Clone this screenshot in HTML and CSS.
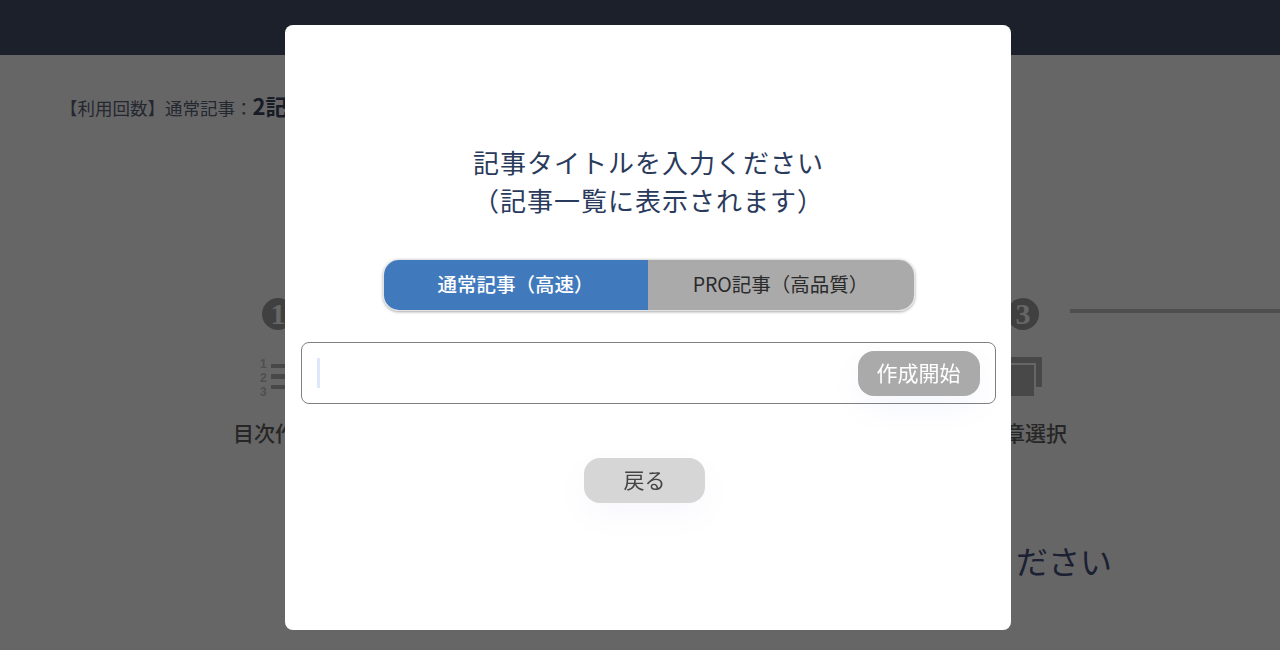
FILE: index.html
```html
<!DOCTYPE html>
<html lang="ja">
<head>
<meta charset="UTF-8">
<meta name="viewport" content="width=device-width, initial-scale=1.0">
<title>記事作成</title>
<link rel="stylesheet" href="styles.css">
</head>
<body>
    <header class="topbar"></header>
    <main class="page">
        <p class="usage">【利用回数】通常記事：<strong>2記事</strong></p>
        <div class="steps">
            <div class="step">
                <span class="step-num">1</span>
                <svg class="step-icon" viewBox="0 0 40 42" aria-hidden="true">
                    <text x="5" y="11.5" class="list-num">1</text>
                    <text x="5" y="25.5" class="list-num">2</text>
                    <text x="5" y="39.5" class="list-num">3</text>
                    <rect x="16" y="8" width="24" height="4"/>
                    <rect x="16" y="18" width="24" height="5"/>
                    <rect x="16" y="29" width="24" height="4"/>
                </svg>
                <span class="step-label">目次作成</span>
            </div>
            <div class="step"></div>
            <div class="step">
                <span class="step-num">3</span>
                <svg class="step-icon" viewBox="0 0 40 42" aria-hidden="true">
                    <path d="M6 1H37V31H31V7H6Z"/>
                    <rect x="0" y="9" width="29" height="31"/>
                </svg>
                <span class="step-label">文章選択</span>
            </div>
            <div class="step-line"></div>
        </div>
        <p class="lead">ください</p>
    </main>

    <div class="overlay">
        <div class="modal">
            <h2 class="modal-title">記事タイトルを入力ください<br>（記事一覧に表示されます）</h2>
            <div class="mode-switch">
                <button class="mode mode-active">通常記事（高速）</button>
                <button class="mode">PRO記事（高品質）</button>
            </div>
            <div class="title-field">
                <span class="caret"></span>
                <button class="start-btn">作成開始</button>
            </div>
            <button class="back-btn">戻る</button>
        </div>
    </div>
</body>
</html>
```

FILE: styles.css
```css
* {
    box-sizing: border-box;
}

body {
    margin: 0;
    height: 650px;
    overflow: hidden;
    background-color: #fff;
    color: #2d3748;
    font-family: "Noto Sans CJK JP", "Noto Sans", sans-serif;
}

.topbar {
    height: 55px;
    background-color: #44516b;
}

.page {
    padding-top: 35px;
}

.usage {
    margin: 0 0 0 60px;
    height: 32px;
    font-size: 17.5px;
    line-height: 30px;
    white-space: nowrap;
    color: #5a6478;
}

.usage strong {
    font-size: 22px;
    color: #3a4560;
}

.steps {
    display: flex;
    margin-top: 176px;
    padding-left: 233px;
}

.step {
    display: flex;
    flex-direction: column;
    align-items: center;
    width: 84px;
}

.step + .step {
    margin-left: 291px;
}

.step:first-child .step-num {
    margin-left: 6px;
}

.step:nth-child(3) .step-num {
    margin-right: 4px;
}

.step-num {
    width: 32px;
    height: 32px;
    border-radius: 50%;
    background-color: #a0a0a0;
    color: #fff;
    font-family: "Liberation Serif", serif;
    font-size: 30px;
    font-weight: bold;
    line-height: 32px;
    text-align: center;
}

.step-icon {
    width: 40px;
    height: 42px;
    margin-top: 26px;
    fill: #b4b4b4;
}

.list-num {
    font-size: 12px;
    font-weight: bold;
    font-family: "Liberation Sans", sans-serif;
    fill: #c8c8c8;
}

.step-label {
    margin-top: 19px;
    font-size: 21px;
    font-weight: 500;
    line-height: 30px;
    white-space: nowrap;
    color: #606060;
}

.step-line {
    flex: 1;
    height: 4px;
    margin: 11px 0 0 3px;
    background-color: #c4c4c4;
}

.lead {
    margin: 89px 168px 0 0;
    font-size: 32px;
    line-height: 48px;
    text-align: right;
    color: #465080;
}

.overlay {
    position: fixed;
    top: 0;
    left: 0;
    right: 0;
    bottom: 0;
    padding: 25px 269px 20px 285px;
    background-color: rgba(0, 0, 0, 0.6);
}

.modal {
    display: flex;
    flex-direction: column;
    align-items: center;
    height: 605px;
    padding: 118px 15px 0 16px;
    border-radius: 8px;
    background-color: #fff;
}

.modal-title {
    margin: 0;
    font-size: 26px;
    font-weight: 400;
    letter-spacing: 1px;
    line-height: 38px;
    text-align: center;
    color: #2a3a5c;
}

.mode-switch {
    display: flex;
    width: 532px;
    height: 52px;
    margin-top: 40px;
    border: 1px solid #e2e2e2;
    border-radius: 16px;
    overflow: hidden;
    box-shadow: 0 1px 3px rgba(0, 0, 0, 0.35);
}

.mode {
    flex: 1;
    padding: 0 0 3px;
    border: none;
    background-color: #aaa;
    color: #2b2b2b;
    font-family: inherit;
    font-size: 19.5px;
}

.mode-active {
    flex: 0 0 264px;
    background-color: #407abd;
    color: #fff;
    font-weight: 500;
}

.title-field {
    display: flex;
    align-items: center;
    justify-content: space-between;
    align-self: stretch;
    height: 62px;
    margin-top: 31px;
    padding: 0 15.5px 0 14.5px;
    border: 1.5px solid #808080;
    border-radius: 8px;
}

.caret {
    width: 3px;
    height: 30px;
    background-color: #dfe8f8;
}

.start-btn {
    width: 122px;
    height: 45px;
    padding: 0 0 3px;
    border: none;
    border-radius: 16px;
    background-color: #aaa;
    color: #fff;
    font-family: inherit;
    font-size: 21px;
    box-shadow: 0 12px 30px rgba(110, 120, 220, 0.06);
}

.back-btn {
    width: 121px;
    height: 45px;
    margin: 54px 8px 0 0;
    padding: 0 0 3px;
    border: none;
    border-radius: 16px;
    background-color: #d6d6d6;
    color: #444;
    font-family: inherit;
    font-size: 21px;
    box-shadow: 0 12px 30px rgba(110, 120, 220, 0.05);
}
```
